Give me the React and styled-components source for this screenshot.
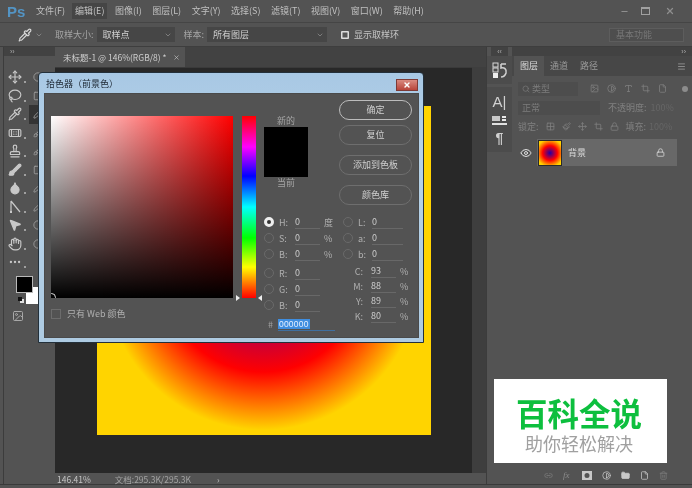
import React from "react";
import styled, { createGlobalStyle } from "styled-components";
import {
  Move, Lasso, Pipette, Bandage, Stamp, Brush, Droplet, MousePointer2, Hand, Ellipsis, Square, Circle, Pen,
  Search, Image, Type, Crop, File, Eye, Lock, Link2, FolderClosed, Trash2, Grid2x2, Paintbrush, ChevronDown, Minus, X,
  Contrast, Menu,
} from "lucide-react";

const GlobalStyle = createGlobalStyle`
  html, body { margin: 0; padding: 0; }
  body {
    width: 692px;
    height: 488px;
    overflow: hidden;
    background: #535353;
    font-family: "Noto Sans CJK SC", "Liberation Sans", sans-serif;
  }
`;

const Frame = styled.div`
  position: relative;
  width: 692px;
  height: 488px;
  display: flex;
  flex-direction: column;
  box-sizing: border-box;
  padding-bottom: 3px;
  background: #535353;
  color: #c4c4c4;
  font-size: 9px;
  overflow: hidden;
  filter: blur(0.3px);
`;

const MenuBar = styled.div`
  height: 23px;
  flex: none;
  display: flex;
  align-items: center;
  padding: 0 4px 0 7px;
  border-bottom: 1px solid #454545;
  box-sizing: border-box;
`;
const Logo = styled.div`
  width: 26px;
  font: bold 15px "Liberation Sans", sans-serif;
  color: #5394c4;
`;
const MenuItem = styled.div`
  padding: 2px 3px;
  margin-right: ${(p) => p.$gap}px;
  white-space: nowrap;
  color: #c0c0c0;
  font-size: 9px;
  line-height: 12px;
  background: ${(p) => (p.$active ? "#454545" : "transparent")};
`;
const WinButtons = styled.div`
  margin-left: auto;
  display: flex;
  align-items: center;
  gap: 15px;
  padding-right: 13px;
  color: #8e8e8e;
`;
const Maximize = styled.div`
  width: 7px;
  height: 5px;
  margin-left: -3px;
  border: 1px solid #a0a0a0;
  border-top-width: 2px;
`;

const OptionsBar = styled.div`
  height: 24px;
  flex: none;
  display: flex;
  align-items: center;
  box-sizing: border-box;
  border-bottom: 1px solid #3e3e3e;
  padding-left: 17px;
`;
const OptLabel = styled.span`
  color: #a4a4a4;
  margin-left: ${(p) => p.$left || 0}px;
  margin-right: 3px;
  font-size: 9px;
`;
const Select = styled.div`
  width: ${(p) => p.$w}px;
  height: 15px;
  display: flex;
  align-items: center;
  justify-content: space-between;
  box-sizing: border-box;
  padding: 0 3px 0 6px;
  background: #464646;
  color: #d0d0d0;
  font-size: 9px;
`;
const Check = styled.div`
  width: 8px;
  height: 8px;
  margin: 0 5px 0 14px;
  border-radius: 1px;
  background: #555;
  box-shadow: inset 0 0 0 1.5px #dcdcdc;
`;
const Preset = styled.div`
  margin-left: auto;
  margin-right: 8px;
  width: 75px;
  height: 14px;
  line-height: 12px;
  padding-left: 6px;
  box-sizing: border-box;
  background: #4e4e4e;
  border: 1px solid #5d5d5d;
  color: #777;
  font-size: 9px;
`;

const Workspace = styled.div`
  flex: 1;
  min-height: 0;
  display: flex;
  border-bottom: 1px solid #3a3a3a;
`;

const ToolBar = styled.div`
  width: 51px;
  margin-left: 3px;
  flex: none;
  display: flex;
  flex-direction: column;
  border-left: 1px solid #3c3c3c;
`;
const Grip = styled.div`
  height: 9px;
  flex: none;
  display: flex;
  align-items: center;
  justify-content: ${(p) => p.$side || "flex-start"};
  padding: 0 6px;
  box-sizing: border-box;
  background: #424242;
  color: #b0b0b0;
  font: 7px/9px "Liberation Sans", sans-serif;
`;
const ToolList = styled.div`
  padding-top: 12px;
`;
const ToolRow = styled.div`
  height: 18.5px;
  display: flex;
  align-items: center;
  padding-left: 4px;
  color: #c8c8c8;
`;
const Flyout = styled.span`
  width: 2px;
  height: 2px;
  margin: 10px 0 0 2px;
  background: #a0a0a0;
`;
const SideTool = styled.div`
  width: 10px;
  height: 19px;
  margin-left: 3px;
  padding-left: 4px;
  display: flex;
  align-items: center;
  color: #a0a0a0;
  background: ${(p) => (p.$active ? "#343434" : "transparent")};
`;
const Swatches = styled.div`
  position: relative;
  height: 29px;
  margin: 4px 0 0 12px;
`;
const FgSwatch = styled.div`
  position: absolute;
  left: 0;
  top: 0;
  z-index: 1;
  width: 15px;
  height: 15px;
  background: #000;
  border: 1px solid #b8b8b8;
`;
const BgSwatch = styled.div`
  position: absolute;
  left: 10px;
  top: 11px;
  width: 18px;
  height: 17px;
  background: #fff;
`;
const DefaultColors = styled.div`
  position: absolute;
  left: 2px;
  top: 21px;
  width: 4px;
  height: 4px;
  background: #111;
  box-shadow: 2px 2px 0 #e0e0e0;
`;
const MaskRow = styled.div`
  padding: 5px 0 0 8px;
  color: #a8a8a8;
`;

const Center = styled.div`
  width: 431px;
  flex: none;
  display: flex;
  flex-direction: column;
`;
const TabBar = styled.div`
  height: 20px;
  flex: none;
  background: #424242;
  display: flex;
`;
const DocTab = styled.div`
  width: 130px;
  display: flex;
  align-items: center;
  gap: 6px;
  padding-left: 8px;
  box-sizing: border-box;
  background: #535353;
  color: #cfcfcf;
  font-size: 8.5px;
  white-space: nowrap;
`;
const CanvasWrap = styled.div`
  flex: 1;
  min-height: 0;
  display: flex;
`;
const Canvas = styled.div`
  flex: 1;
  padding: 38px 0 0 42px;
  background: #282828;
  border-top: 1px solid #3a3a3a;
`;
const ScrollTrack = styled.div`
  width: 14px;
  flex: none;
  background: #3e3e3e;
`;
const Picture = styled.div`
  width: 334px;
  height: 329px;
  background: radial-gradient(circle at 166px 166px, #2000a8 0, #d00030 73px, #ff0000 100px, #ffd400 158px);
`;
const StatusBar = styled.div`
  height: 11px;
  flex: none;
  display: flex;
  align-items: center;
  color: #c4c4c4;
  font-size: 8.5px;
  padding-left: 2px;
`;
const StatusDoc = styled.span`
  margin-left: 24px;
  color: #a4a4a4;
`;
const StatusArrow = styled.span`
  margin-left: 26px;
`;

const Dock = styled.div`
  width: 26px;
  flex: none;
  border-left: 1px solid #3c3c3c;
  display: flex;
  flex-direction: column;
  align-items: center;
  color: #d0d0d0;
  box-sizing: border-box;
`;
const DockGroup = styled.div`
  width: 100%;
  padding: ${(p) => p.$pad};
  margin-bottom: 3px;
  background: #4c4c4c;
  display: flex;
  flex-direction: column;
  align-items: center;
  gap: ${(p) => p.$gap || 0}px;
`;
const DockLetter = styled.span`
  font: 15px/16px "Liberation Sans", sans-serif;
`;
const DockPara = styled.span`
  font: bold 14px/15px "Liberation Sans", sans-serif;
`;

const Panel = styled.div`
  flex: 1;
  display: flex;
  flex-direction: column;
  min-width: 0;
`;
const Tabs = styled.div`
  height: 20px;
  flex: none;
  display: flex;
  align-items: center;
  padding: 0 6px 0 2px;
  background: #474747;
`;
const Tab = styled.div`
  width: ${(p) => p.$w}px;
  line-height: 20px;
  text-align: center;
  font-size: 9px;
  color: ${(p) => (p.$active ? "#dcdcdc" : "#9a9a9a")};
  background: ${(p) => (p.$active ? "#535353" : "transparent")};
`;
const PanelMenu = styled.div`
  margin-left: auto;
  color: #a0a0a0;
  line-height: 0;
`;
const PanelRows = styled.div`
  padding-top: 3px;
`;
const PanelRow = styled.div`
  display: flex;
  align-items: center;
  gap: ${(p) => p.$gap || 8}px;
  height: 19px;
  padding-left: 6px;
  color: #808080;
  font-size: 9px;
  white-space: nowrap;
`;
const FieldBox = styled.div`
  width: ${(p) => p.$w}px;
  height: 14px;
  display: flex;
  align-items: center;
  gap: 2px;
  padding-left: 4px;
  box-sizing: border-box;
  background: #4d4d4d;
  color: #7c7c7c;
  margin-right: ${(p) => p.$right || 0}px;
`;
const FilterDot = styled.span`
  width: 6px;
  height: 6px;
  margin-left: 7px;
  border-radius: 50%;
  background: #8c8c8c;
`;
const Dim = styled.span`
  color: #666;
  margin-left: -4px;
`;
const LayerRow = styled.div`
  display: flex;
  align-items: center;
  height: 27px;
  margin: 3px 15px 0 2px;
  color: #dcdcdc;
  font-size: 9px;
`;
const EyeCell = styled.div`
  width: 23px;
  display: flex;
  justify-content: center;
  color: #e0e0e0;
`;
const LayerBody = styled.div`
  flex: 1;
  height: 100%;
  display: flex;
  align-items: center;
  gap: 6px;
  background: #686868;
  padding: 0 12px 0 1px;
`;
const Thumb = styled.div`
  width: 22px;
  height: 24px;
  border: 1px solid #2a2a2a;
  background: radial-gradient(circle, #2000a8 0, #ff0000 45%, #ffd400 85%);
`;
const LayerName = styled.span`
  flex: 1;
`;
const PanelFoot = styled.div`
  margin-top: auto;
  height: 18px;
  display: flex;
  align-items: center;
  justify-content: flex-end;
  gap: 10px;
  padding-right: 24px;
  color: #c8c8c8;
`;
const FxLabel = styled.span`
  width: 9px;
  font: italic 9px "Liberation Serif", serif;
  color: #8c8c8c;
`;

const Dialog = styled.div`
  position: absolute;
  left: 38px;
  top: 72px;
  width: 386px;
  height: 271px;
  box-sizing: border-box;
  padding: 0 4px 4px 5px;
  display: flex;
  flex-direction: column;
  background: linear-gradient(#a8c8e4, #b6d2e8 30%, #aecbe2);
  border: 1px solid #23303a;
  border-radius: 4px 4px 0 0;
`;
const DialogTitle = styled.div`
  height: 20px;
  flex: none;
  display: flex;
  align-items: center;
  justify-content: space-between;
  color: #1b2530;
  font-size: 9px;
  padding-left: 2px;
`;
const CloseBtn = styled.div`
  width: 22px;
  height: 12px;
  box-sizing: border-box;
  margin-top: 4px;
  margin-right: 1px;
  background: linear-gradient(#d98a80, #b8443a);
  border: 1px solid #7d3a36;
  color: #fff;
  display: flex;
  align-items: center;
  justify-content: center;
`;
const DialogBody = styled.div`
  flex: 1;
  display: flex;
  background: #535353;
  box-shadow: inset 0 0 0 1px #4a4a4a;
`;
const PickerColumn = styled.div`
  width: 214px;
  flex: none;
  padding: 23px 0 0 7px;
  box-sizing: border-box;
`;
const Pickers = styled.div`
  display: flex;
  gap: 9px;
`;
const ColorField = styled.div`
  position: relative;
  width: 182px;
  height: 182px;
  overflow: hidden;
  background: linear-gradient(to top, #000, transparent), linear-gradient(to right, #fff, #ff0000);
  &::after {
    content: "";
    position: absolute;
    left: -4px;
    bottom: -4px;
    width: 7px;
    height: 7px;
    border: 1px solid #ddd;
    border-radius: 50%;
  }
`;
const HueBar = styled.div`
  position: relative;
  width: 14px;
  height: 182px;
  background: linear-gradient(#ff0000, #ff00ff 17%, #0000ff 33%, #00ffff 50%, #00ff00 67%, #ffff00 83%, #ff0000);
  &::before,
  &::after {
    content: "";
    position: absolute;
    bottom: -3px;
    border-top: 3px solid transparent;
    border-bottom: 3px solid transparent;
  }
  &::before {
    left: -6px;
    border-left: 4px solid #eee;
  }
  &::after {
    right: -6px;
    border-right: 4px solid #eee;
  }
`;
const WebOnly = styled.div`
  display: flex;
  align-items: center;
  gap: 6px;
  margin-top: 9px;
  color: #b0b0b0;
  font-size: 9px;
`;
const CheckBox = styled.div`
  width: 8px;
  height: 8px;
  border: 1px solid #6c6c6c;
`;
const ValueColumn = styled.div`
  flex: 1;
  display: flex;
  flex-direction: column;
`;
const TopSection = styled.div`
  height: 121px;
  flex: none;
  display: flex;
`;
const SwatchColumn = styled.div`
  width: 81px;
  padding: 22px 0 0 6px;
  box-sizing: border-box;
`;
const SwatchLabel = styled.div`
  width: 44px;
  text-align: center;
  line-height: 12px;
  color: #a4a4a4;
  font-size: 9px;
`;
const NewColor = styled.div`
  width: 44px;
  height: 50px;
  background: #000;
`;
const Buttons = styled.div`
  display: flex;
  flex-direction: column;
  padding-top: 7px;
`;
const DlgButton = styled.div`
  width: 73px;
  height: 20px;
  margin-bottom: ${(p) => p.$after}px;
  box-sizing: border-box;
  line-height: 17px;
  text-align: center;
  border: 1px solid ${(p) => (p.$main ? "#bcbcbc" : "#6e6e6e")};
  border-radius: 10px;
  color: #d0d0d0;
  font-size: 9px;
`;
const Values = styled.div`
  display: flex;
  padding-left: 6px;
`;
const ValCol = styled.div`
  width: ${(p) => p.$w}px;
  flex: none;
`;
const ValRow = styled.div`
  height: ${(p) => p.$h || 16}px;
  margin-bottom: ${(p) => p.$after || 0}px;
  display: flex;
  align-items: center;
  font-size: 9px;
  color: #b0b0b0;
`;
const Radio = styled.div`
  width: 10px;
  height: 10px;
  flex: none;
  box-sizing: border-box;
  border-radius: 50%;
  margin-right: 5px;
  border: ${(p) => (p.$on ? "3px solid #eee" : "1px solid #6a6a6a")};
  background: ${(p) => (p.$on ? "#333" : "transparent")};
`;
const ValName = styled.span`
  width: ${(p) => p.$w || 16}px;
  flex: none;
  text-align: ${(p) => p.$align || "left"};
  margin-right: ${(p) => p.$right || 0}px;
`;
const ValInput = styled.div`
  width: ${(p) => p.$w || 25}px;
  flex: none;
  height: 13px;
  line-height: 11px;
  box-sizing: border-box;
  border-bottom: 1px solid #686868;
  margin-right: 4px;
  color: #cccccc;
`;
const HexRow = styled.div`
  display: flex;
  align-items: center;
  height: 14px;
  margin-top: 4px;
  padding-left: 4px;
  color: #a0a0a0;
  font-size: 9px;
  gap: 5px;
`;
const HexInput = styled.div`
  width: 57px;
  height: 13px;
  border-bottom: 1px solid #3f6f9f;
`;
const HexValue = styled.span`
  display: inline-block;
  line-height: 11px;
  padding: 0 1px;
  background: #3f8ee0;
  color: #e4efff;
  font: 8.5px "Liberation Sans", sans-serif;
  letter-spacing: 0.2px;
`;

const Watermark = styled.div`
  position: absolute;
  left: 494px;
  top: 379px;
  width: 173px;
  height: 84px;
  background: #fff;
  text-align: center;
  padding: 14px 3px 0 0;
  box-sizing: border-box;
`;
const WmTitle = styled.div`
  color: #0dbf3e;
  font-size: 31.5px;
  line-height: 38px;
  font-weight: 700;
`;
const WmSub = styled.div`
  color: #a0a0a0;
  font-size: 18px;
  line-height: 20px;
  margin-top: 2px;
`;

const PenTool = ({ size }) => (
  <svg width={size} height={size} viewBox="0 0 14 14" fill="none" stroke="currentColor" strokeWidth="1.2">
    <path d="M3 1 L3 12 M3 1 L12 12" />
    <rect x="2" y="11" width="2" height="2" fill="currentColor" stroke="none" />
  </svg>
);

const DockHistory = () => (
  <svg width="16" height="17" viewBox="0 0 16 17">
    <rect x="1" y="1" width="5" height="4" fill="none" stroke="#d8d8d8" />
    <rect x="1" y="6" width="5" height="4" fill="none" stroke="#d8d8d8" />
    <rect x="1" y="11" width="5" height="5" fill="#eeeeee" />
    <path d="M9 2 H14 M9 2 V6 C12 5 15 7 14 11 C13 14 11 15 9 15" fill="none" stroke="#d0d0d0" strokeWidth="1.6" />
  </svg>
);

const DockParagraph = () => (
  <svg width="17" height="11" viewBox="0 0 17 11">
    <rect x="1" y="1" width="8" height="5" fill="#c8c8c8" />
    <rect x="11" y="1" width="4" height="2" fill="#e8e8e8" />
    <rect x="11" y="4" width="4" height="2" fill="#e8e8e8" />
    <rect x="1" y="8" width="15" height="2" fill="#e0e0e0" />
  </svg>
);

const MaskIcon = () => (
  <svg width="10" height="9" viewBox="0 0 10 9">
    <path fillRule="evenodd" d="M0 0 H10 V9 H0 Z M5 2 A2.5 2.5 0 1 0 5 7 A2.5 2.5 0 1 0 5 2 Z" fill="currentColor" />
  </svg>
);

const tools = [
  [Move, Circle], [Lasso, Square], [Pipette, Pen], [Bandage, Brush], [Stamp, Brush], [Brush, Square],
  [Droplet, Pen], [PenTool, Pen], [MousePointer2, Circle], [Hand, Circle], [Ellipsis, null],
];
const menus = [
  ["文件(F)", 4], ["编辑(E)", 4.5], ["图像(I)", 4.5], ["图层(L)", 4.5], ["文字(Y)", 4.5],
  ["选择(S)", 4.5], ["滤镜(T)", 4.5], ["视图(V)", 4.5], ["窗口(W)", 4.5], ["帮助(H)", 0],
];

export default function App() {
  return (
    <Frame>
      <GlobalStyle />
      <MenuBar>
        <Logo>Ps</Logo>
        {menus.map(([m, g]) => (
          <MenuItem key={m} $gap={g} $active={m === "编辑(E)"}>{m}</MenuItem>
        ))}
        <WinButtons>
          <Minus size={9} strokeWidth={3} />
          <Maximize />
          <X size={10} strokeWidth={3} />
        </WinButtons>
      </MenuBar>
      <OptionsBar>
        <Pipette size={14} color="#d8d8d8" style={{ marginLeft: 1 }} />
        <ChevronDown size={8} color="#999" style={{ marginLeft: 3 }} />
        <OptLabel $left={12}>取样大小:</OptLabel>
        <Select $w={78}>取样点<ChevronDown size={8} color="#999" /></Select>
        <OptLabel $left={9}>样本:</OptLabel>
        <Select $w={120}>所有图层<ChevronDown size={8} color="#999" /></Select>
        <Check />
        <span>显示取样环</span>
        <Preset>基本功能</Preset>
      </OptionsBar>
      <Workspace>
        <ToolBar>
          <Grip>››</Grip>
          <ToolList>
            {tools.map(([Icon, Side], i) => (
              <ToolRow key={i}>
                <Icon size={14} fill={i === 5 || i === 6 || i === 8 ? "currentColor" : "none"} />
                <Flyout />
                <SideTool $active={i === 2}>{Side && <Side size={12} />}</SideTool>
              </ToolRow>
            ))}
          </ToolList>
          <Swatches>
            <FgSwatch />
            <BgSwatch />
            <DefaultColors />
          </Swatches>
          <MaskRow><Image size={12} /></MaskRow>
        </ToolBar>
        <Center>
          <TabBar>
            <DocTab>未标题-1 @ 146%(RGB/8) * <X size={7} /></DocTab>
          </TabBar>
          <CanvasWrap>
            <Canvas><Picture /></Canvas>
            <ScrollTrack />
          </CanvasWrap>
          <StatusBar>
            146.41%
            <StatusDoc>文档:295.3K/295.3K</StatusDoc>
            <StatusArrow>›</StatusArrow>
          </StatusBar>
        </Center>
        <Dock>
          <Grip $side="flex-end">‹‹</Grip>
          <DockGroup $pad="6px 0 5px"><DockHistory /></DockGroup>
          <DockGroup $pad="7px 0 6px" $gap={5}>
            <DockLetter>A|</DockLetter>
            <DockParagraph />
            <DockPara>¶</DockPara>
          </DockGroup>
        </Dock>
        <Panel>
          <Grip $side="flex-end">››</Grip>
          <Tabs>
            <Tab $w={30} $active>图层</Tab>
            <Tab $w={30}>通道</Tab>
            <Tab $w={30}>路径</Tab>
            <PanelMenu><Menu size={9} /></PanelMenu>
          </Tabs>
          <PanelRows>
            <PanelRow>
              <FieldBox $w={60} $right={4}><Search size={8} />类型</FieldBox>
              <Image size={9} />
              <Contrast size={9} />
              <Type size={9} />
              <Crop size={9} />
              <File size={9} />
              <FilterDot />
            </PanelRow>
            <PanelRow>
              <FieldBox $w={82}>正常</FieldBox>
              <span>不透明度:</span>
              <Dim>100%</Dim>
            </PanelRow>
            <PanelRow $gap={7}>
              锁定:
              <Grid2x2 size={9} />
              <Paintbrush size={9} />
              <Move size={9} />
              <Crop size={9} />
              <Lock size={9} />
              <span>填充:</span>
              <Dim>100%</Dim>
            </PanelRow>
          </PanelRows>
          <LayerRow>
            <EyeCell><Eye size={12} /></EyeCell>
            <LayerBody>
              <Thumb />
              <LayerName>背景</LayerName>
              <Lock size={9} />
            </LayerBody>
          </LayerRow>
          <PanelFoot>
            <Link2 size={9} color="#7c7c7c" />
            <FxLabel>fx</FxLabel>
            <MaskIcon />
            <Contrast size={9} />
            <FolderClosed size={9} fill="currentColor" />
            <File size={9} />
            <Trash2 size={9} color="#7c7c7c" />
          </PanelFoot>
        </Panel>
      </Workspace>

      <Dialog>
        <DialogTitle>
          拾色器（前景色）
          <CloseBtn><X size={8} strokeWidth={4} /></CloseBtn>
        </DialogTitle>
        <DialogBody>
          <PickerColumn>
            <Pickers>
              <ColorField />
              <HueBar />
            </Pickers>
            <WebOnly><CheckBox />只有 Web 颜色</WebOnly>
          </PickerColumn>
          <ValueColumn>
            <TopSection>
              <SwatchColumn>
                <SwatchLabel>新的</SwatchLabel>
                <NewColor />
                <SwatchLabel>当前</SwatchLabel>
              </SwatchColumn>
              <Buttons>
                <DlgButton $main $after={5}>确定</DlgButton>
                <DlgButton $after={10}>复位</DlgButton>
                <DlgButton $after={10}>添加到色板</DlgButton>
                <DlgButton $after={0}>颜色库</DlgButton>
              </Buttons>
            </TopSection>
            <Values>
              <ValCol $w={79}>
                <ValRow><Radio $on /><ValName>H:</ValName><ValInput>0</ValInput>度</ValRow>
                <ValRow><Radio /><ValName>S:</ValName><ValInput>0</ValInput>%</ValRow>
                <ValRow $after={3}><Radio /><ValName>B:</ValName><ValInput>0</ValInput>%</ValRow>
                <ValRow><Radio /><ValName>R:</ValName><ValInput>0</ValInput></ValRow>
                <ValRow><Radio /><ValName>G:</ValName><ValInput>0</ValInput></ValRow>
                <ValRow><Radio /><ValName>B:</ValName><ValInput>0</ValInput></ValRow>
                <HexRow>#<HexInput><HexValue>000000</HexValue></HexInput></HexRow>
              </ValCol>
              <ValCol $w={70}>
                <ValRow><Radio /><ValName $w={14}>L:</ValName><ValInput $w={31}>0</ValInput></ValRow>
                <ValRow><Radio /><ValName $w={14}>a:</ValName><ValInput $w={31}>0</ValInput></ValRow>
                <ValRow $after={2}><Radio /><ValName $w={14}>b:</ValName><ValInput $w={31}>0</ValInput></ValRow>
                {[["C:", 93], ["M:", 88], ["Y:", 89], ["K:", 80]].map(([l, v]) => (
                  <ValRow key={l} $h={15}>
                    <ValName $w={20} $align="right" $right={8}>{l}</ValName>
                    <ValInput>{v}</ValInput>%
                  </ValRow>
                ))}
              </ValCol>
            </Values>
          </ValueColumn>
        </DialogBody>
      </Dialog>

      <Watermark>
        <WmTitle>百科全说</WmTitle>
        <WmSub>助你轻松解决</WmSub>
      </Watermark>
    </Frame>
  );
}
